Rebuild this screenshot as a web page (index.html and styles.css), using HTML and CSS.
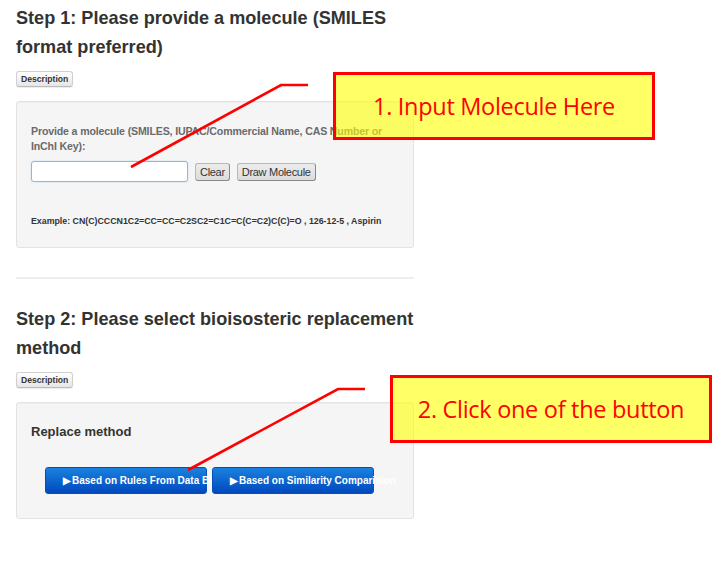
FILE: index.html
```html
<!DOCTYPE html>
<html>
<head>
<meta charset="utf-8">
<link rel="stylesheet" href="styles.css">
</head>
<body>
<div class="page">
  <section class="step">
    <h2 class="step-title">Step 1: Please provide a molecule (SMILES format preferred)</h2>
    <button class="desc-btn">Description</button>
    <div class="well well-one">
      <div class="field-label">Provide a molecule (SMILES, IUPAC/Commercial Name, CAS Number or InChI Key):</div>
      <div class="input-row">
        <input class="mol-input" type="text">
        <button class="small-btn">Clear</button>
        <button class="small-btn">Draw Molecule</button>
      </div>
      <div class="example">Example: CN(C)CCCN1C2=CC=CC=C2SC2=C1C=C(C=C2)C(C)=O , 126-12-5 , Aspirin</div>
    </div>
  </section>
  <hr class="divider">
  <section class="step">
    <h2 class="step-title">Step 2: Please select bioisosteric replacement method</h2>
    <button class="desc-btn">Description</button>
    <div class="well well-two">
      <div class="method-title">Replace method</div>
      <div class="method-row">
        <button class="blue-btn"><span class="tri">&#9654;</span>Based on Rules From Data Base</button>
        <button class="blue-btn"><span class="tri">&#9654;</span>Based on Similarity Comparision</button>
      </div>
    </div>
  </section>
</div>

<svg class="lines" width="726" height="562" viewBox="0 0 726 562">
  <polyline points="131,167 281,85 308,85" fill="none" stroke="#ff0000" stroke-width="2.6"/>
  <polyline points="188,470 338,389 365,389" fill="none" stroke="#ff0000" stroke-width="2.6"/>
</svg>
<div class="note note-one">1. Input Molecule Here</div>
<div class="note note-two">2. Click one of the button</div>
</body>
</html>
```
FILE: styles.css
```css
html, body {
  margin: 0;
  padding: 0;
  background: #ffffff;
}
body {
  width: 726px;
  height: 562px;
  position: relative;
  overflow: hidden;
  font-family: "Liberation Sans", Arial, sans-serif;
  color: #333;
}
.page {
  width: 398px;
  padding: 4px 0 0 16px;
}
.step-title {
  margin: 0;
  width: 412px;
  font-size: 18.1px;
  line-height: 29px;
  font-weight: bold;
  color: #333;
}
.desc-btn {
  display: block;
  margin-top: 9px;
  height: 16px;
  padding: 0 4px;
  font-family: "Liberation Sans", Arial, sans-serif;
  font-size: 8.6px;
  font-weight: bold;
  color: #333;
  background: linear-gradient(#ffffff, #e6e6e6);
  border: 1px solid #d0d0d0;
  border-bottom-color: #bbb;
  border-radius: 3px;
  box-shadow: 0 1px 1px rgba(0,0,0,0.08);
}
.well {
  margin-top: 14px;
  background: #f5f5f5;
  border: 1px solid #e3e3e3;
  border-radius: 3px;
  box-shadow: inset 0 1px 1px rgba(0,0,0,0.03);
}
.well-one {
  height: 147px;
  box-sizing: border-box;
  padding: 22px 14px 0 14px;
}
.field-label {
  font-size: 10.6px;
  letter-spacing: -0.15px;
  line-height: 15px;
  font-weight: bold;
  color: #6a6a6a;
}
.input-row {
  display: flex;
  align-items: center;
  margin-top: 7px;
}
.mol-input {
  width: 157px;
  height: 21px;
  box-sizing: border-box;
  border: 1px solid #8fb8e0;
  border-radius: 3px;
  background: #fff;
  box-shadow: 0 0 2px rgba(82,168,236,0.35);
  margin: 0 7px 0 0;
  padding: 0;
}
.small-btn {
  height: 18px;
  padding: 0 4px;
  margin: 0 7px 0 0;
  font-family: "Liberation Sans", Arial, sans-serif;
  font-size: 11px;
  letter-spacing: -0.3px;
  color: #333;
  background: linear-gradient(#ececec, #dcdcdc);
  border: 1px solid #b8b8b8;
  border-right-color: #8a8a8a;
  border-bottom-color: #8a8a8a;
  border-radius: 3px;
}
.example {
  margin-top: 33px;
  font-size: 8.8px;
  font-weight: bold;
  color: #333;
  line-height: 12px;
  white-space: nowrap;
}
.divider {
  margin: 29px 0 26px 0;
  border: 0;
  border-top: 2px solid #eeeeee;
  height: 0;
}
.well-two {
  height: 117px;
  box-sizing: border-box;
  padding: 21px 14px 0 14px;
}
.method-title {
  font-size: 13px;
  font-weight: bold;
  line-height: 16px;
  color: #333;
}
.method-row {
  display: flex;
  gap: 5px;
  margin-top: 27px;
  padding-left: 14px;
}
.blue-btn {
  width: 162px;
  height: 27px;
  flex: none;
  text-align: left;
  white-space: nowrap;
  overflow: visible;
  padding: 0 0 0 17px;
  font-family: "Liberation Sans", Arial, sans-serif;
  font-size: 10px;
  font-weight: bold;
  color: #fff;
  background: linear-gradient(#1a82e0, #0048bd);
  border: 1px solid #0550b8;
  border-radius: 3px;
  position: relative;
}
.tri {
  font-size: 9.5px;
  margin-right: 1px;
  vertical-align: 0;
}
.lines {
  position: absolute;
  left: 0;
  top: 0;
  pointer-events: none;
}
.note {
  position: absolute;
  box-sizing: border-box;
  width: 322px;
  height: 68px;
  background: rgba(255, 255, 0, 0.6);
  border: 3px solid #ff0000;
  color: #ff0000;
  font-family: "Open Sans", "Noto Sans", sans-serif;
  font-size: 23.5px;
  display: flex;
  align-items: center;
  justify-content: center;
  letter-spacing: -0.3px;
}
.note-one {
  left: 333px;
  top: 72px;
}
.note-two {
  left: 390px;
  top: 375px;
}
```
